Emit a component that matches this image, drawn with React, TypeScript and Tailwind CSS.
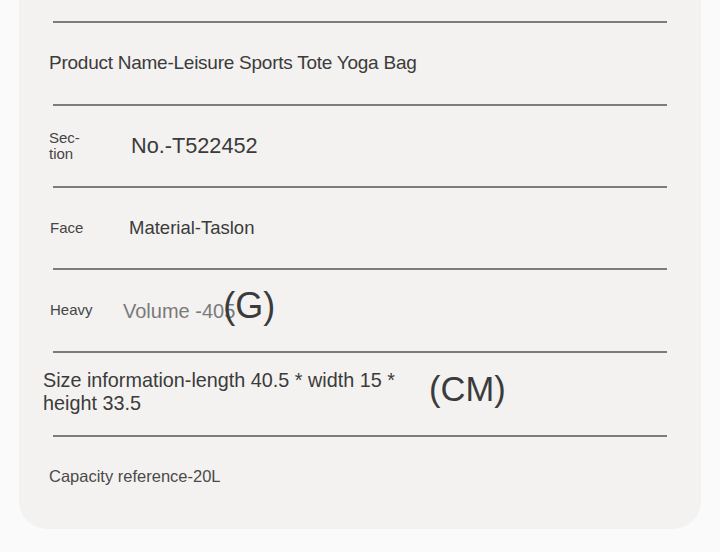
import React from 'react';

const font = { fontFamily: '"Liberation Sans", Arial, sans-serif' };

function Divider() {
  return <div className="mx-[34px] h-[2px] bg-[#7c7c7c]" />;
}

export default function App() {
  return (
    <div className="w-[720px] h-[552px] bg-[#fafafa] px-[19px]" style={font}>
      <div className="bg-[#f3f2f0] rounded-b-[28px] pt-[21px] pb-[14px]">
        <Divider />

        {/* Product name */}
        <div className="h-[81px] flex items-center pl-[30px] text-[19px] text-[#3b3b3b] tracking-[-0.25px]">
          Product Name-Leisure Sports Tote Yoga Bag
        </div>
        <Divider />

        {/* Section no. */}
        <div className="h-[80px] flex items-center pl-[30px]">
          <div className="w-[82px] text-[15px] leading-[16px] text-[#454545]">
            Sec-
            <br />
            tion
          </div>
          <div className="text-[21.7px] text-[#3b3b3b]">No.-T522452</div>
        </div>
        <Divider />

        {/* Face material */}
        <div className="h-[80px] flex items-center pl-[31px]">
          <div className="w-[79px] text-[15px] text-[#454545]">Face</div>
          <div className="text-[18.5px] text-[#3b3b3b]">Material-Taslon</div>
        </div>
        <Divider />

        {/* Weight */}
        <div className="h-[81px] flex items-center pl-[31px]">
          <div className="w-[73px] text-[15px] text-[#454545]">Heavy</div>
          <div className="text-[20px] text-[#7a7a7a]">Volume -405</div>
          <div className="-ml-[12px] mb-[10px] text-[36px] leading-none text-[#3b3b3b]">(G)</div>
        </div>
        <Divider />

        {/* Size */}
        <div className="h-[82px] flex items-center pl-[24px]">
          <div className="w-[366px] mb-[4px] text-[19.8px] leading-[23px] text-[#3b3b3b]">
            Size information-length 40.5 * width 15 * height 33.5
          </div>
          <div className="ml-[20px] mb-[10px] text-[34.5px] leading-none text-[#3b3b3b]">(CM)</div>
        </div>
        <Divider />

        {/* Capacity */}
        <div className="h-[78px] flex items-center pl-[30px] text-[16.5px] text-[#4a4a4a]">
          Capacity reference-20L
        </div>
      </div>
    </div>
  );
}
